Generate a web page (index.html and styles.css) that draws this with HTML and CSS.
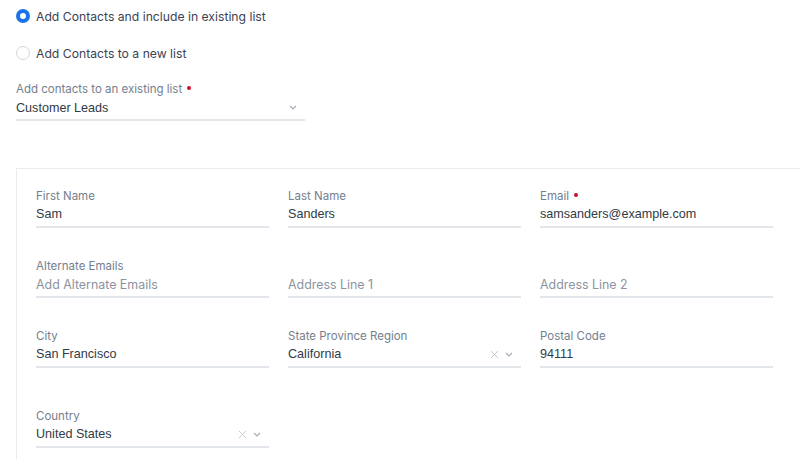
FILE: index.html
```html
<!DOCTYPE html>
<html>
<head>
<meta charset="utf-8">
<link rel="stylesheet" href="styles.css">
</head>
<body>
<div class="page">
  <div class="radios">
    <label class="radio">
      <span class="dot checked"></span>
      <span class="radio-text">Add Contacts and include in existing list</span>
    </label>
    <label class="radio">
      <span class="dot"></span>
      <span class="radio-text">Add Contacts to a new list</span>
    </label>
  </div>

  <div class="field list-field">
    <div class="label">Add contacts to an existing list <span class="req"></span></div>
    <div class="control">
      <span class="value">Customer Leads</span>
      <span class="icons">
        <svg class="chev" width="8" height="5" viewBox="0 0 8 5"><path d="M1 1l3 3 3-3" fill="none" stroke="#a3abb8" stroke-width="1.2"/></svg>
      </span>
    </div>
  </div>

  <div class="card">
    <div class="grid">
      <div class="field">
        <div class="label">First Name</div>
        <div class="control"><span class="value">Sam</span></div>
      </div>
      <div class="field">
        <div class="label">Last Name</div>
        <div class="control"><span class="value">Sanders</span></div>
      </div>
      <div class="field">
        <div class="label">Email <span class="req"></span></div>
        <div class="control"><span class="value">samsanders@example.com</span></div>
      </div>

      <div class="field">
        <div class="label">Alternate Emails</div>
        <div class="control"><span class="placeholder">Add Alternate Emails</span></div>
      </div>
      <div class="field">
        <div class="label"></div>
        <div class="control"><span class="placeholder">Address Line 1</span></div>
      </div>
      <div class="field">
        <div class="label"></div>
        <div class="control"><span class="placeholder">Address Line 2</span></div>
      </div>

      <div class="field">
        <div class="label">City</div>
        <div class="control"><span class="value">San Francisco</span></div>
      </div>
      <div class="field">
        <div class="label">State Province Region</div>
        <div class="control">
          <span class="value">California</span>
          <span class="icons">
            <svg class="clear" width="9" height="9" viewBox="0 0 9 9"><path d="M1 1l7 7M8 1l-7 7" fill="none" stroke="#c5cad3" stroke-width="1"/></svg>
            <svg class="chev" width="8" height="5" viewBox="0 0 8 5"><path d="M1 1l3 3 3-3" fill="none" stroke="#a3abb8" stroke-width="1.2"/></svg>
          </span>
        </div>
      </div>
      <div class="field">
        <div class="label">Postal Code</div>
        <div class="control"><span class="value">94111</span></div>
      </div>

      <div class="field country">
        <div class="label">Country</div>
        <div class="control">
          <span class="value">United States</span>
          <span class="icons">
            <svg class="clear" width="9" height="9" viewBox="0 0 9 9"><path d="M1 1l7 7M8 1l-7 7" fill="none" stroke="#c5cad3" stroke-width="1"/></svg>
            <svg class="chev" width="8" height="5" viewBox="0 0 8 5"><path d="M1 1l3 3 3-3" fill="none" stroke="#a3abb8" stroke-width="1.2"/></svg>
          </span>
        </div>
      </div>
    </div>
  </div>
</div>
</body>
</html>
```
FILE: styles.css
```css
html, body {
  margin: 0;
  padding: 0;
  background: #ffffff;
  overflow: hidden;
}
body {
  width: 800px;
  height: 459px;
  font-family: Inter, "Liberation Sans", sans-serif;
}
.page {
  padding: 6px 0 0 16px;
}
.radios {
  display: flex;
  flex-direction: column;
  gap: 17px;
}
.radio {
  display: flex;
  align-items: center;
  height: 20px;
  gap: 6px;
}
.dot {
  box-sizing: border-box;
  width: 14px;
  height: 14px;
  border-radius: 50%;
  border: 1px solid #d3d7de;
  background: #fff;
}
.dot.checked {
  border: 4px solid #1a73e8;
  background: #fff;
}
.radio-text {
  font-size: 12.2px;
  color: #3b4352;
}
.field {
  display: flex;
  flex-direction: column;
}
.list-field {
  width: 289px;
  margin-top: 19px;
}
.list-field .control {
  height: 23px;
  padding-bottom: 0;
}
.label {
  font-size: 11.5px;
  line-height: 14px;
  height: 14px;
  color: #747e8d;
  display: flex;
  align-items: center;
}
.req {
  display: inline-block;
  width: 4px;
  height: 4px;
  border-radius: 50%;
  background: #c8102e;
  margin-left: 5px;
  margin-top: -3px;
}
.control {
  display: flex;
  align-items: center;
  justify-content: space-between;
  height: 22px;
  padding-bottom: 1px;
  border-bottom: 2px solid #e3e6eb;
}
.value {
  font-family: "Liberation Sans", Arial, sans-serif;
  font-size: 12.6px;
  color: #323a46;
}
.placeholder {
  font-size: 12.4px;
  color: #8b939f;
}
.icons {
  display: flex;
  align-items: center;
  gap: 6px;
  padding-right: 8px;
}
.card {
  margin-top: 47px;
  width: 820px;
  height: 300px;
  border: 1px solid #e9ebee;
  box-sizing: border-box;
  padding: 20px 0 0 19px;
}
.grid {
  display: grid;
  grid-template-columns: 233px 233px 233px;
  column-gap: 19px;
  row-gap: 31px;
}
.country {
  margin-top: 10px;
}
```
